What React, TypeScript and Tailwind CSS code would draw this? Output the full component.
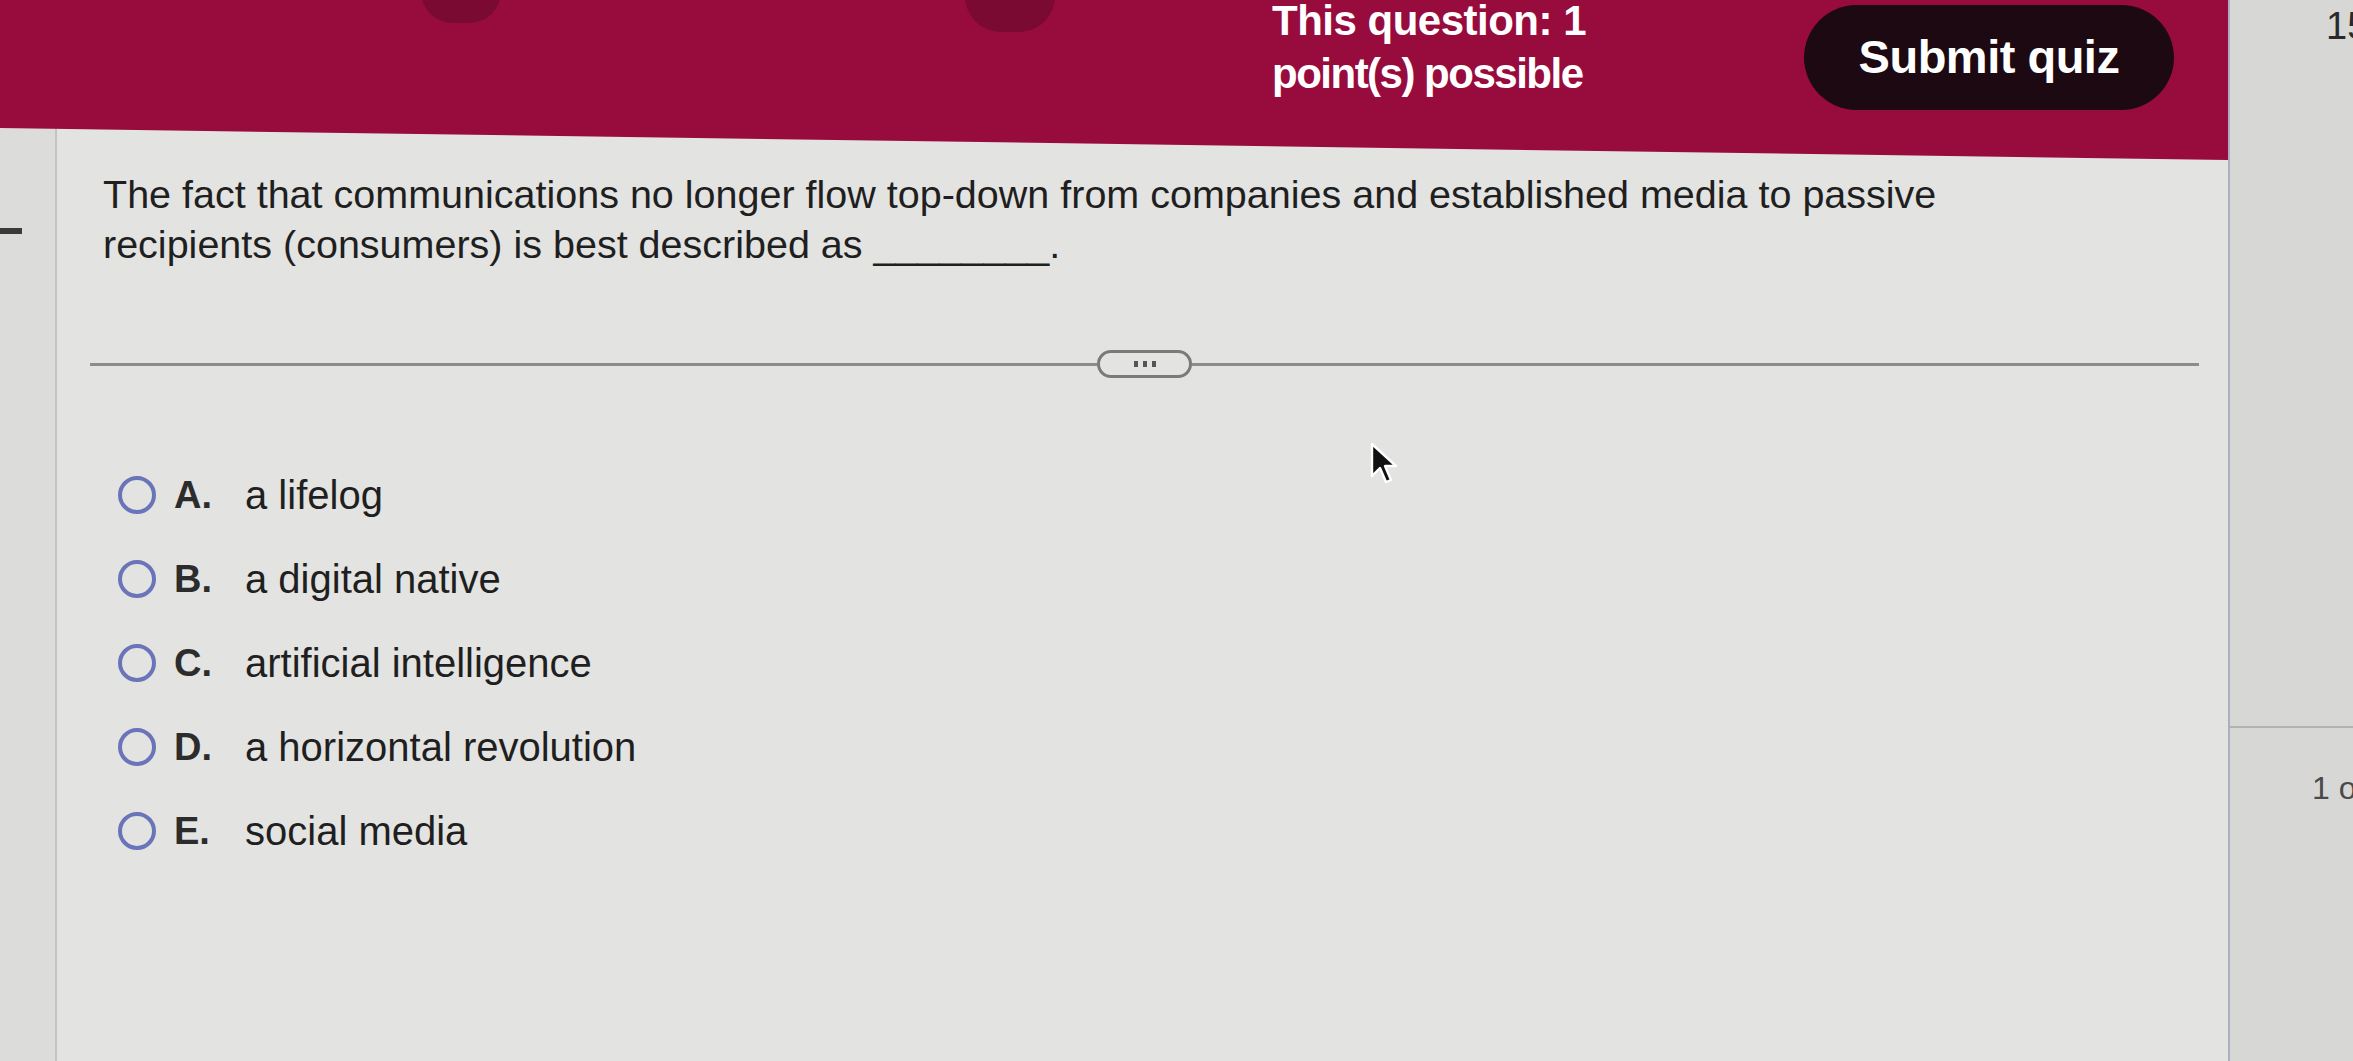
import { useState } from 'react'

const options = [
  { key: 'A', text: 'a lifelog' },
  { key: 'B', text: 'a digital native' },
  { key: 'C', text: 'artificial intelligence' },
  { key: 'D', text: 'a horizontal revolution' },
  { key: 'E', text: 'social media' },
]

function Cursor() {
  return (
    <svg width="28" height="44" viewBox="0 0 14 22" className="absolute left-[1370px] top-[442px]">
      <path d="M1 1 L1 17 L5 13 L8 20 L10.5 19 L7.5 12 L13 12 Z" fill="#111" stroke="#fff" strokeWidth="1.2" strokeLinejoin="round" />
    </svg>
  )
}

export default function App() {
  const [selected, setSelected] = useState<string | null>(null)

  return (
    <div className="relative w-[2353px] h-[1061px] flex overflow-hidden bg-[#d5d6d4] font-['Liberation_Sans',Arial,sans-serif]">
      <div className="w-[2228px] shrink-0 flex flex-col">
        {/* top bar */}
        <header className="relative z-10 h-[160px] -mb-[32px] bg-[#980b3d] [clip-path:polygon(0_0,100%_0,100%_100%,0_80%)] flex items-start">
          <div className="absolute left-[421px] -top-[40px] w-[80px] h-[63px] rounded-full bg-[#7a0a31]" />
          <div className="absolute left-[965px] -top-[40px] w-[90px] h-[72px] rounded-full bg-[#7a0a31]" />
          <div className="ml-[1272px] -mt-[6px] text-white font-bold text-[42px] leading-[53px]">
            <div className="tracking-[-0.5px]">This question: 1</div>
            <div className="tracking-[-1.5px]">point(s) possible</div>
          </div>
          <button className="ml-auto mr-[54px] mt-[5px] w-[370px] h-[105px] rounded-full bg-[#1d0912] text-white font-bold text-[47px] tracking-[-0.5px]">
            Submit quiz
          </button>
        </header>

        <div className="flex-1 flex">
          {/* left gutter */}
          <div className="w-[57px] bg-[#dcdcda] border-r-2 border-[#c3c3c1] pt-[100px]">
            <div className="w-[22px] h-[6px] bg-[#3a3a3a]" />
          </div>

          <main className="flex-1 bg-[#e3e3e1] pt-[41px]">
            <p className="max-w-[1920px] pl-[46px] text-[39.5px] leading-[50px] text-[#1f1f1f]">
              The fact that communications no longer flow top-down from companies and established media to passive
              recipients (consumers) is best described as ________.
            </p>

            <div className="mt-[81px] ml-[33px] mr-[29px] flex items-center">
              <div className="flex-1 h-[3px] bg-[#8c8c8c]" />
              <div className="w-[95px] h-[28px] rounded-full border-[3px] border-[#7a7a7a] flex items-center justify-center gap-[5px]">
                <span className="w-[4px] h-[6px] bg-[#555]" />
                <span className="w-[4px] h-[6px] bg-[#555]" />
                <span className="w-[4px] h-[6px] bg-[#555]" />
              </div>
              <div className="flex-1 h-[3px] bg-[#8c8c8c]" />
            </div>

            <ul className="mt-[75px] pl-[61px] flex flex-col">
              {options.map(o => (
                <li key={o.key} className="h-[84px] flex items-center cursor-pointer" onClick={() => setSelected(o.key)}>
                  <span className="w-[38px] h-[38px] rounded-full border-4 border-[#6a74b8] flex items-center justify-center">
                    {selected === o.key && <span className="w-[18px] h-[18px] rounded-full bg-[#6a74b8]" />}
                  </span>
                  <span className="ml-[18px] w-[71px] text-[38px] font-bold text-[#2c2c2c]">{o.key}.</span>
                  <span className="text-[40px] text-[#1f1f1f]">{o.text}</span>
                </li>
              ))}
            </ul>
          </main>
        </div>
      </div>

      {/* right edge of next pane */}
      <div className="flex-1 flex flex-col border-l-2 border-[#aab0bf] bg-[#d7d8d6]">
        <div className="pl-[96px] -mt-[2px] text-[38px] text-[#2a2a2a] whitespace-nowrap">15</div>
        <div className="mt-[671px] h-[2px] bg-[#b2b2b0]" />
        <div className="mt-[36px] pl-[82px] text-[32px] text-[#4a4a4a] whitespace-nowrap">1 o</div>
      </div>

      <Cursor />
    </div>
  )
}
